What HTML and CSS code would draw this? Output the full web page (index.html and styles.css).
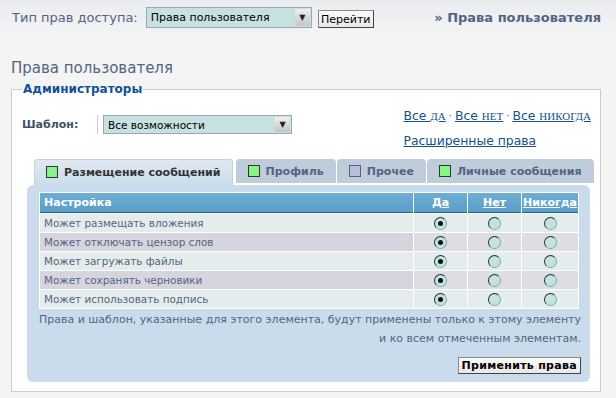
FILE: index.html
```html
<!DOCTYPE html>
<html lang="ru">
<head>
  <meta charset="UTF-8">
  <title>Права пользователя</title>
  <link rel="stylesheet" href="styles.css">
</head>
<body>
  <div class="topbar">
    <div class="jump">
      <span class="jump-label">Тип прав доступа:</span>
      <div class="select select-type">
        <span class="select-value">Права пользователя</span>
        <span class="select-arrow">▼</span>
      </div>
      <button type="button" class="btn btn-go">Перейти</button>
    </div>
    <div class="crumb">» Права пользователя</div>
  </div>

  <h1 class="page-title">Права пользователя</h1>

  <fieldset class="group">
    <legend>Администраторы</legend>

    <div class="group-head">
      <div class="template">
        <span class="template-label">Шаблон:</span>
        <span class="template-sep"></span>
        <div class="select select-template">
          <span class="select-value">Все возможности</span>
          <span class="select-arrow">▼</span>
        </div>
      </div>
      <div class="quick">
        <div class="quick-all">
          <a href="#">Все <span class="caps">ДА</span></a>
          <span class="dot">·</span>
          <a href="#">Все <span class="caps">НЕТ</span></a>
          <span class="dot">·</span>
          <a href="#">Все <span class="caps">НИКОГДА</span></a>
        </div>
        <a href="#" class="advanced">Расширенные права</a>
      </div>
    </div>

    <div class="tabs">
      <div class="tab tab-active"><span class="tab-box box-yes"></span>Размещение сообщений</div>
      <div class="tab"><span class="tab-box box-yes"></span>Профиль</div>
      <div class="tab"><span class="tab-box box-mixed"></span>Прочее</div>
      <div class="tab"><span class="tab-box box-yes"></span>Личные сообщения</div>
    </div>

    <div class="tab-panel">
      <table class="perm-table">
        <thead>
          <tr>
            <th class="col-name">Настройка</th>
            <th class="col-opt"><a href="#">Да</a></th>
            <th class="col-opt"><a href="#">Нет</a></th>
            <th class="col-opt col-never"><a href="#">Никогда</a></th>
          </tr>
        </thead>
        <tbody>
          <tr class="row1">
            <td class="name">Может размещать вложения</td>
            <td class="opt"><span class="radio checked"></span></td>
            <td class="opt"><span class="radio"></span></td>
            <td class="opt"><span class="radio"></span></td>
          </tr>
          <tr class="row2">
            <td class="name">Может отключать цензор слов</td>
            <td class="opt"><span class="radio checked"></span></td>
            <td class="opt"><span class="radio"></span></td>
            <td class="opt"><span class="radio"></span></td>
          </tr>
          <tr class="row1">
            <td class="name">Может загружать файлы</td>
            <td class="opt"><span class="radio checked"></span></td>
            <td class="opt"><span class="radio"></span></td>
            <td class="opt"><span class="radio"></span></td>
          </tr>
          <tr class="row2">
            <td class="name">Может сохранять черновики</td>
            <td class="opt"><span class="radio checked"></span></td>
            <td class="opt"><span class="radio"></span></td>
            <td class="opt"><span class="radio"></span></td>
          </tr>
          <tr class="row1">
            <td class="name">Может использовать подпись</td>
            <td class="opt"><span class="radio checked"></span></td>
            <td class="opt"><span class="radio"></span></td>
            <td class="opt"><span class="radio"></span></td>
          </tr>
        </tbody>
      </table>

      <p class="note">Права и шаблон, указанные для этого элемента, будут применены только к этому элементу<br>и ко всем отмеченным элементам.</p>

      <div class="actions">
        <button type="button" class="btn btn-apply">Применить права</button>
      </div>
    </div>
  </fieldset>
</body>
</html>
```

FILE: styles.css
```css
* {
  margin: 0;
  padding: 0;
  box-sizing: border-box;
}

body {
  width: 616px;
  height: 398px;
  font-family: "DejaVu Sans", Verdana, sans-serif;
  font-size: 11px;
  color: #536482;
  background: linear-gradient(180deg, #eaecf0 0px, #f1f2f4 30px, #f4f4f4 60px);
  overflow: hidden;
}

a {
  color: #105289;
}

/* top bar */

.topbar {
  display: flex;
  justify-content: space-between;
  align-items: center;
  height: 28px;
  padding: 7px 15px 0 12px;
}

.jump {
  display: flex;
  align-items: center;
}

.jump-label {
  font-size: 13px;
  color: #536482;
  margin-right: 8px;
}

.crumb {
  font-size: 13px;
  font-weight: 700;
  color: #536482;
}

.select {
  display: flex;
  align-items: center;
  justify-content: space-between;
  background: #c6e1e0;
  border: 1px solid #98a8b8;
  color: #000;
}

.select-type {
  width: 166px;
  height: 21px;
  padding-left: 4px;
  font-size: 11px;
}

.select-template {
  width: 189px;
  height: 19px;
  padding-left: 4px;
  font-size: 10.5px;
}

.select-arrow {
  display: flex;
  align-items: center;
  justify-content: center;
  width: 15px;
  align-self: stretch;
  margin: 1px;
  background: linear-gradient(180deg, #f0f0f0, #c4c4c4);
  font-size: 8px;
  color: #222;
}

.btn {
  font-family: "DejaVu Sans", Verdana, sans-serif;
  font-size: 11px;
  color: #000;
  background: linear-gradient(180deg, #fafafa, #e8e8e8);
  border: 1px solid;
  border-color: #8a8a8a #444 #444 #8a8a8a;
  cursor: pointer;
}

.btn-go {
  width: 56px;
  height: 18px;
  margin-left: 6px;
  margin-top: 3px;
}

/* page heading */

.page-title {
  font-size: 15px;
  font-weight: 400;
  color: #536482;
  line-height: 18px;
  padding-left: 11px;
  margin-top: 31px;
  margin-bottom: 5px;
}

/* group */

.group {
  width: 590px;
  min-width: 0;
  margin-left: 11px;
  border: 1px solid #cccccc;
  background: #ffffff;
  padding: 0;
}

.group legend {
  margin-left: 10px;
  padding: 0 1px;
  font-size: 12px;
  line-height: 15px;
  font-weight: 700;
  color: #115098;
}

.group-head {
  display: flex;
  justify-content: space-between;
  padding: 11px 9px 0 10px;
}

.template {
  display: flex;
  align-items: center;
  margin-top: 7px;
  height: 19px;
}

.template-label {
  font-weight: 700;
  color: #425067;
  width: 75px;
}

.template-sep {
  width: 1px;
  height: 19px;
  background: #cccccc;
  margin-right: 5px;
}

.quick {
  display: flex;
  flex-direction: column;
  gap: 9px;
  font-size: 12.4px;
  line-height: 15px;
}

.quick-all {
  display: flex;
  gap: 3px;
}

.caps {
  font-family: "Liberation Serif", serif;
  font-size: 11px;
}

.dot {
  color: #536482;
  font-size: 10px;
}

/* tabs */

.tabs {
  display: flex;
  gap: 1px;
  padding-left: 22px;
  margin-top: 11px;
}

.tab {
  display: flex;
  align-items: center;
  gap: 6px;
  height: 24px;
  padding: 0 12px;
  font-weight: 700;
  color: #536482;
  background: #bfcddb;
  border-radius: 4px 4px 0 0;
  margin-bottom: 1px;
}

.tab-active {
  height: 26px;
  margin-bottom: 0;
  margin-right: 2px;
  color: #333333;
  background: linear-gradient(180deg, #e1e9f2, #cadceb);
  box-shadow: inset 0 1px 0 #c4d0dc, inset 1px 0 0 #c4d0dc, inset -1px 0 0 #c4d0dc;
}

.tab:last-child {
  padding-right: 13px;
}

.tab-box {
  width: 12px;
  height: 12px;
  border: 1px solid #333;
}

.box-yes {
  background: #86f486;
}

.box-mixed {
  background: #b7bddc;
  border-color: #536482;
}

/* panel */

.tab-panel {
  margin: 0 10px 9px 15px;
  padding: 7px 11px 8px 12px;
  background: #cadceb;
  border-radius: 6px;
}

.perm-table {
  width: 100%;
  border-collapse: separate;
  border-spacing: 1px;
  background: #ffffff;
  font-size: 10.4px;
}

.perm-table th {
  height: 20px;
  font-size: 11px;
  color: #ffffff;
  font-weight: 700;
  background: linear-gradient(180deg, #6eaed6, #5a9dc7);
  border-bottom: 1px solid #23659b;
}

.perm-table th a {
  color: #ffffff;
}

.col-name {
  text-align: left;
  padding-left: 4px;
}

.col-opt {
  width: 53px;
  text-align: center;
}

.col-never {
  width: 56px;
}

.perm-table td {
  height: 18px;
}

.name {
  padding-left: 4px;
}

.opt {
  text-align: center;
}

.row1 td {
  background: #e5edec;
}

.row2 .name {
  background: #d6d5df;
}

.row2 .opt {
  background: #dedde3;
}

.radio {
  display: inline-block;
  width: 13px;
  height: 13px;
  border-radius: 50%;
  border: 1px solid;
  border-color: #1d3434 #6fb0b0 #6fb0b0 #1d3434;
  background: #c6e2e0;
  vertical-align: middle;
  position: relative;
}

.radio.checked::after {
  content: "";
  position: absolute;
  left: 3px;
  top: 3px;
  width: 5px;
  height: 5px;
  border-radius: 50%;
  background: #111;
}

.note {
  text-align: right;
  white-space: nowrap;
  font-size: 11px;
  line-height: 19px;
  margin-top: 1px;
  margin-left: -8px;
  margin-right: -2px;
}

.actions {
  display: flex;
  justify-content: flex-end;
  margin-top: 9px;
  margin-right: -2px;
}

.btn-apply {
  height: 17px;
  padding: 0 3px;
  font-weight: 700;
  letter-spacing: 0.3px;
}
```
